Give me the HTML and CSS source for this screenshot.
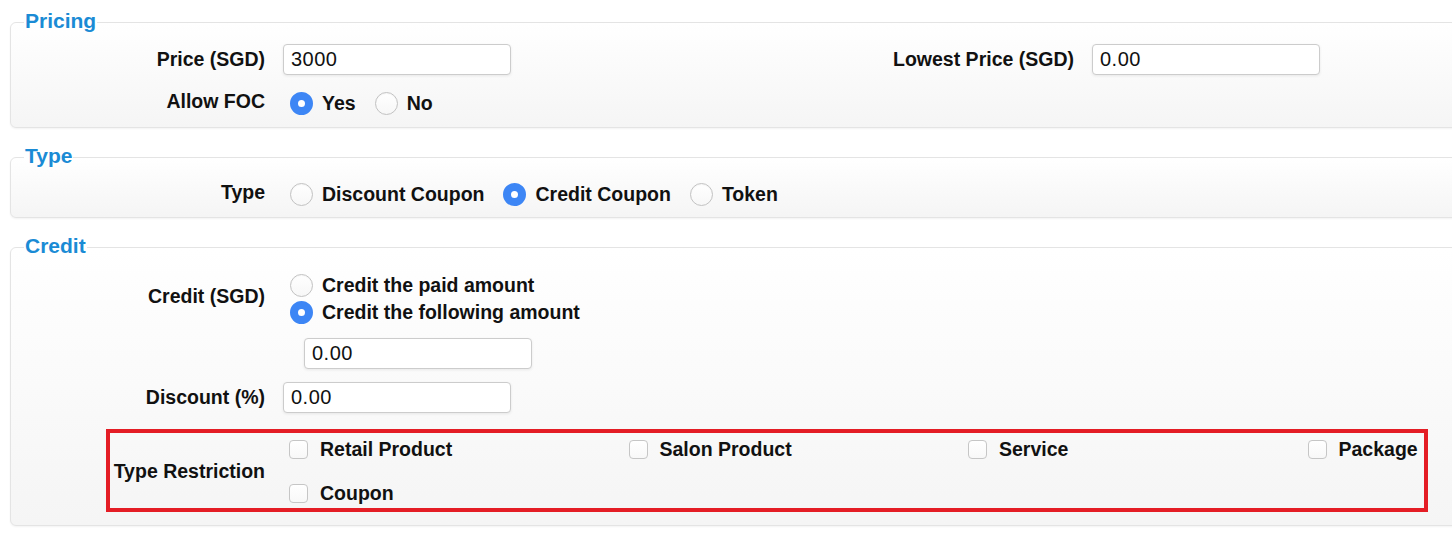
FILE: index.html
```html
<!DOCTYPE html>
<html lang="en">
<head>
<meta charset="utf-8">
<title>Coupon Pricing</title>
<link rel="stylesheet" href="styles.css">
</head>
<body>
<div class="page">
  <fieldset class="panel panel-pricing">
    <legend class="panel-title">Pricing</legend>
    <div class="pair-grid">
      <div class="field field-input">
        <label class="field-label">Price (SGD)</label>
        <input class="text-input" type="text" value="3000">
      </div>
      <div class="field field-input">
        <label class="field-label">Lowest Price (SGD)</label>
        <input class="text-input" type="text" value="0.00">
      </div>
      <div class="field field-choice foc-row">
        <label class="field-label label-top">Allow FOC</label>
        <div class="choice-line">
          <label class="choice"><input type="radio" name="foc" checked><span>Yes</span></label>
          <label class="choice"><input type="radio" name="foc"><span>No</span></label>
        </div>
      </div>
    </div>
  </fieldset>

  <fieldset class="panel panel-type">
    <legend class="panel-title">Type</legend>
    <div class="field field-choice">
      <label class="field-label label-top">Type</label>
      <div class="choice-line">
        <label class="choice"><input type="radio" name="type"><span>Discount Coupon</span></label>
        <label class="choice"><input type="radio" name="type" checked><span>Credit Coupon</span></label>
        <label class="choice"><input type="radio" name="type"><span>Token</span></label>
      </div>
    </div>
  </fieldset>

  <fieldset class="panel panel-credit">
    <legend class="panel-title">Credit</legend>
    <div class="field credit-row">
      <label class="field-label label-raised">Credit (SGD)</label>
      <div class="choice-stack">
        <label class="choice"><input type="radio" name="credit"><span>Credit the paid amount</span></label>
        <label class="choice"><input type="radio" name="credit" checked><span>Credit the following amount</span></label>
      </div>
    </div>
    <div class="amount-row">
      <input class="text-input" type="text" value="0.00">
    </div>
    <div class="field field-input discount-row">
      <label class="field-label">Discount (%)</label>
      <input class="text-input" type="text" value="0.00">
    </div>
    <div class="restriction-row">
      <label class="field-label restriction-label">Type Restriction</label>
      <div class="check-grid">
        <label class="check"><input type="checkbox"><span>Retail Product</span></label>
        <label class="check"><input type="checkbox"><span>Salon Product</span></label>
        <label class="check"><input type="checkbox"><span>Service</span></label>
        <label class="check"><input type="checkbox"><span>Package</span></label>
        <label class="check"><input type="checkbox"><span>Coupon</span></label>
      </div>
    </div>
  </fieldset>
</div>
</body>
</html>
```

FILE: styles.css
```css
html, body {
  margin: 0;
  padding: 0;
  background: #ffffff;
  overflow: hidden;
}

body {
  font-family: "Liberation Sans", Arial, Helvetica, sans-serif;
  color: #111111;
}

.page {
  padding-top: 9px;
  padding-left: 10px;
  width: 1660px;
}

.panel {
  width: 1640px;
  box-sizing: border-box;
  margin: 0 0 16px 0;
  padding: 0;
  border: 1px solid #e4e4e4;
  border-radius: 6px;
  background: linear-gradient(#ffffff, #f5f5f5);
  box-shadow: 0 1px 2px rgba(0, 0, 0, 0.05);
  min-width: 0;
}

.panel-title {
  margin-left: 13px;
  padding: 0 1px 2px 1px;
  font-size: 21px;
  line-height: 24px;
  font-weight: bold;
  color: #1a8bd5;
}

.panel-pricing { padding-bottom: 10px; }
.panel-type { padding-bottom: 9px; }
.panel-credit { padding-bottom: 13px; }

.pair-grid {
  display: grid;
  grid-template-columns: 809px 809px;
  row-gap: 15px;
  padding-top: 9px;
}

.field {
  display: flex;
  column-gap: 18px;
}

.field-label {
  flex: 0 0 254px;
  text-align: right;
  font-size: 19.5px;
  font-weight: bold;
  line-height: 31px;
  white-space: nowrap;
}

.field-input {
  align-items: center;
  height: 31px;
}

.label-top {
  line-height: 22px;
  align-self: flex-start;
}

.text-input {
  box-sizing: border-box;
  width: 228px;
  height: 31px;
  margin: 0;
  padding: 0 7px;
  border: 1px solid #cccccc;
  border-radius: 4px;
  background: #ffffff;
  box-shadow: 0 1px 3px rgba(0, 0, 0, 0.08);
  font-family: "Liberation Sans", Arial, Helvetica, sans-serif;
  font-size: 20px;
  letter-spacing: 0.5px;
  color: #111111;
  outline: none;
}

.field-choice {
  height: 27px;
}

.panel-type .field-choice {
  margin-top: 11px;
}

.choice-line {
  display: flex;
  align-items: center;
  column-gap: 19px;
  padding-left: 7px;
  height: 27px;
}

.choice-stack {
  display: flex;
  flex-direction: column;
  padding-left: 7px;
}

.choice {
  display: flex;
  align-items: center;
  column-gap: 9px;
  height: 27px;
  font-size: 19.5px;
  font-weight: bold;
  line-height: 27px;
  white-space: nowrap;
}

.choice input[type="radio"] {
  appearance: none;
  -webkit-appearance: none;
  box-sizing: border-box;
  width: 23px;
  height: 23px;
  margin: 0;
  border-radius: 50%;
  border: 1px solid #c2c2c2;
  background: linear-gradient(#ffffff, #f7f7f7);
  box-shadow: inset 0 1px 1px rgba(0, 0, 0, 0.04);
  flex: 0 0 auto;
}

.choice input[type="radio"]:checked {
  border: 8px solid #3d86f5;
  background: #ffffff;
  box-shadow: none;
}

.credit-row {
  margin-top: 12px;
  align-items: center;
}

.label-raised {
  line-height: 22px;
  margin-bottom: 6px;
}

.amount-row {
  padding-left: 293px;
  margin-top: 12px;
  height: 31px;
}

.discount-row {
  margin-top: 13px;
}

.restriction-row {
  display: flex;
  align-items: center;
  column-gap: 18px;
  width: 1322px;
  box-sizing: border-box;
  margin: 16px 0 0 95px;
  border: 4px solid #e41d25;
}

.restriction-label {
  flex: 0 0 155px;
  line-height: 24px;
}

.check-grid {
  display: grid;
  grid-template-columns: repeat(4, 339.5px);
  row-gap: 20px;
  padding: 4px 0 3px 6px;
  flex: 0 0 auto;
}

.check {
  display: flex;
  align-items: center;
  column-gap: 12px;
  height: 24px;
  font-size: 19.5px;
  font-weight: bold;
  line-height: 24px;
  white-space: nowrap;
}

.check input[type="checkbox"] {
  appearance: none;
  -webkit-appearance: none;
  box-sizing: border-box;
  width: 19px;
  height: 19px;
  margin: 0;
  border: 1px solid #c6c6c6;
  border-radius: 4px;
  background: linear-gradient(#ffffff, #f8f8f8);
  flex: 0 0 auto;
}
```
